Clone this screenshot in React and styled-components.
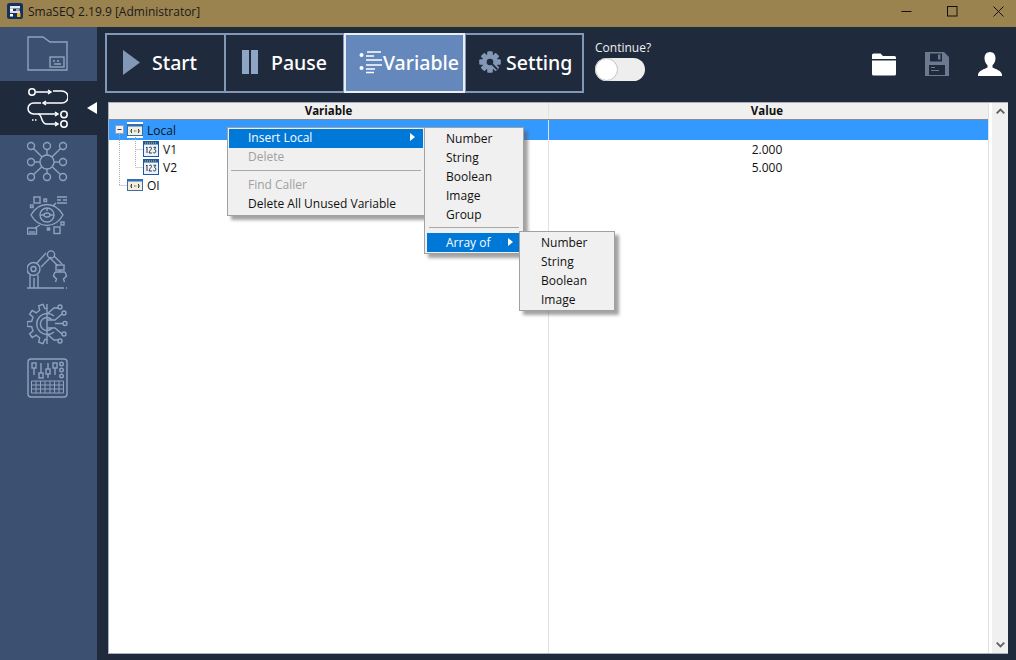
import React from "react";
import styled, { createGlobalStyle } from "styled-components";

const GlobalStyle = createGlobalStyle`
  html, body { margin: 0; padding: 0; height: 100%; overflow: hidden; }
  body { font-family: "Open Sans", "Noto Sans", sans-serif; }
`;

const Window = styled.div`
  width: 1016px;
  height: 660px;
  display: flex;
  flex-direction: column;
  background-color: #1f2a3c;
`;

const TitleBar = styled.div`
  height: 27px;
  box-sizing: border-box;
  flex: none;
  display: flex;
  align-items: center;
  background-color: #9b834f;
  padding: 0 0 5px 7px;
`;

const TitleText = styled.div`
  font-size: 12px;
  color: #1a1a1a;
  margin-left: 5px;
`;

const WindowButtons = styled.div`
  margin-left: auto;
  display: flex;
  align-items: center;
`;

const WindowButton = styled.div`
  width: 46px;
  height: 22px;
  box-sizing: border-box;
  padding-left: 10px;
  display: flex;
  align-items: center;
  justify-content: center;
`;

const Body = styled.div`
  flex: 1;
  display: flex;
  min-height: 0;
`;

const Sidebar = styled.div`
  width: 97px;
  flex: none;
  background-color: #3c5071;
  display: flex;
  flex-direction: column;
`;

const SideItem = styled.div`
  position: relative;
  height: 54px;
  display: flex;
  align-items: center;
  padding-left: 27px;
  background-color: ${(props) => (props.$active ? "#1f2a3c" : "transparent")};
`;

const SideArrow = styled.div`
  position: absolute;
  right: 0;
  top: 21px;
  border-top: 6px solid transparent;
  border-bottom: 6px solid transparent;
  border-right: 10px solid #ffffff;
`;

const Main = styled.div`
  flex: 1;
  display: flex;
  flex-direction: column;
  min-width: 0;
  padding: 6px 8px 6px 8px;
`;

const Toolbar = styled.div`
  height: 60px;
  flex: none;
  display: flex;
  align-items: stretch;
  margin-bottom: 9px;
`;

const ToolButton = styled.div`
  width: ${(props) => props.$width}px;
  margin-left: ${(props) => props.$overlap || 0}px;
  box-sizing: border-box;
  position: relative;
  z-index: ${(props) => (props.$active ? 1 : 0)};
  display: flex;
  align-items: center;
  padding: 0 0 2px ${(props) => props.$pad}px;
  gap: ${(props) => props.$gap}px;
  border: 2px solid ${(props) => (props.$active ? "#e8eef6" : "#8298b6")};
  background-color: ${(props) => (props.$active ? "#6488bc" : "#1f2a3c")};
  color: #ffffff;
  font-size: 19.5px;
  font-weight: 500;
  font-family: "Noto Sans", "Open Sans", sans-serif;
`;

const ContinueBox = styled.div`
  margin-left: 11px;
  padding-top: 6px;
  display: flex;
  flex-direction: column;
  gap: 2px;
`;

const ContinueLabel = styled.div`
  font-size: 12px;
  color: #f0f0f0;
  line-height: 17px;
`;

const ToggleTrack = styled.div`
  width: 50px;
  height: 23px;
  border-radius: 12px;
  background-color: #eeeeee;
  display: flex;
  align-items: center;
`;

const ToggleKnob = styled.div`
  width: 21px;
  height: 21px;
  box-sizing: content-box;
  border-radius: 50%;
  background-color: #ffffff;
  border: 1px solid #c4c4c4;
`;

const ToolIcons = styled.div`
  margin-left: auto;
  display: flex;
  align-items: center;
  gap: 29px;
  padding: 2px 6px 0 0;
  height: 60px;
  box-sizing: border-box;
`;

const Panel = styled.div`
  flex: 1;
  min-height: 0;
  margin-left: 3px;
  display: flex;
  background-color: #ffffff;
  border: 1px solid #a9b0ba;
`;

const Table = styled.div`
  position: relative;
  width: 880px;
  flex: none;
  display: flex;
  flex-direction: column;
  border-right: 1px solid #e2e2e2;
  box-sizing: border-box;
`;

const HeaderRow = styled.div`
  height: 16px;
  flex: none;
  display: grid;
  grid-template-columns: 440px 439px;
  background-color: #f0f0f0;
  border-bottom: 1px solid #8a8a8a;
`;

const HeaderCell = styled.div`
  text-align: center;
  font-size: 11.5px;
  font-weight: 700;
  line-height: 16px;
  color: #111111;
  padding-right: ${(props) => (props.$last ? "3px" : 0)};
  border-right: ${(props) => (props.$last ? "none" : "1px solid #e2e2e2")};
`;

const Row = styled.div`
  height: ${(props) => props.$height}px;
  flex: none;
  display: grid;
  grid-template-columns: 440px 439px;
  align-items: stretch;
  background-color: ${(props) => (props.$selected ? "#3399ff" : "transparent")};
`;

const NameCell = styled.div`
  display: flex;
  align-items: center;
  padding-left: ${(props) => props.$indent}px;
  gap: 4px;
  font-size: 12px;
  color: #111111;
  border-right: 1px solid #e2e2e2;
`;

const ValueCell = styled.div`
  display: flex;
  align-items: center;
  justify-content: center;
  padding-right: 3px;
  font-size: 12px;
  color: #111111;
`;

const FillRow = styled.div`
  flex: 1;
  display: grid;
  grid-template-columns: 440px 439px;
`;

const FillCell = styled.div`
  border-right: 1px solid #e2e2e2;
`;

const TreeGuides = styled.svg`
  position: absolute;
  left: 0;
  top: 0;
  pointer-events: none;
`;

const Scrollbar = styled.div`
  width: 16px;
  margin-left: 3px;
  flex: none;
  display: flex;
  flex-direction: column;
  justify-content: space-between;
  align-items: center;
  background-color: #f0f0f0;
  padding: 5px 0;
`;

const Menu = styled.div`
  position: absolute;
  left: ${(props) => props.$left}px;
  top: ${(props) => props.$top}px;
  width: ${(props) => props.$width}px;
  box-sizing: border-box;
  padding: 1px ${(props) => props.$inset}px 1px;
  background-color: #f0f0f0;
  border: 1px solid #a0a0a0;
  box-shadow: 4px 4px 3px rgba(90, 90, 90, 0.55);
  z-index: ${(props) => props.$z};
`;

const MenuItem = styled.div`
  height: 19px;
  box-sizing: border-box;
  display: flex;
  align-items: center;
  justify-content: space-between;
  padding: 0 8px ${(props) => (props.$lift ? 3 : 1)}px 19px;
  font-size: 12px;
  color: ${(props) =>
    props.$hot ? "#ffffff" : props.$off ? "#a0a0a0" : "#111111"};
  background-color: ${(props) => (props.$hot ? "#0078d7" : "transparent")};
`;

const MenuSeparator = styled.div`
  height: 1px;
  background-color: #a8a8a8;
  margin: 3px 2px 5px;
`;

const MenuArrow = styled.div`
  border-top: 4px solid transparent;
  border-bottom: 4px solid transparent;
  border-left: 5px solid #ffffff;
`;

const sideStroke = {
  fill: "none",
  stroke: "#8fa3bf",
  strokeWidth: 1.4,
};

const FolderIcon = () => (
  <svg width="41" height="36" viewBox="27 36 41 36" {...sideStroke}>
    <path d="M28 37h15l7 5h17v28H28z" />
    <rect x="50" y="57" width="14" height="10" />
    <path d="M53 61h2M57 61h2M54 64h7" />
  </svg>
);

const FlowIcon = () => (
  <svg width="41" height="42" viewBox="27 87 41 42" fill="none" stroke="#ffffff" strokeWidth="1.5">
    <circle cx="32" cy="92" r="3.2" />
    <path d="M36 92h15M48 90l3 2-3 2" />
    <path d="M53 91h9a6 6 0 0 1 0 12H43M46 101l-3 2 3 2" />
    <path d="M41 103h-7.500a5.500 5.500 0 0 0 0 11H58M55 112l3 2-3 2" />
    <circle cx="64" cy="114.500" r="3.2" />
    <path d="M32 120h6" strokeDasharray="1.5 1.5" />
    <path d="M38 114c2 0 2 1 3 3 1 3 2 7 5 7h12M55 122l3 2-3 2" />
    <circle cx="64" cy="124" r="3.2" />
  </svg>
);

const NetworkIcon = () => {
  const nodes = [
    [31, 146], [47, 146], [63, 146], [31, 162],
    [63, 162], [31, 177], [47, 177], [63, 177],
  ];
  return (
    <svg width="41" height="42" viewBox="27 141 41 42" {...sideStroke}>
      <circle cx="47" cy="162" r="7" />
      {nodes.map(([x, y]) => {
        const len = Math.hypot(x - 47, y - 162);
        const ux = (x - 47) / len;
        const uy = (y - 162) / len;
        return (
          <g key={`${x}-${y}`}>
            <circle cx={x} cy={y} r="3.5" />
            <line x1={47 + ux * 7} y1={162 + uy * 7} x2={x - ux * 3.5} y2={y - uy * 3.5} />
          </g>
        );
      })}
    </svg>
  );
};

const EyeIcon = () => (
  <svg width="41" height="40" viewBox="27 196 41 40" {...sideStroke}>
    <path d="M31 215c8-14 24-14 32 0-8 14-24 14-32 0z" />
    <circle cx="47" cy="215" r="7" />
    <ellipse cx="47" cy="215" rx="3" ry="2" />
    <path d="M40 215h4M50 215h4M47 208v3" />
    <rect x="34" y="197" width="6" height="6" />
    <rect x="44" y="199" width="2.5" height="2.5" />
    <rect x="30.5" y="205" width="2.5" height="2.5" />
    <path d="M57 197h10M57 200h4M63 200h4M57 203h10" />
    <path d="M53 206l3-3M40 225l-5 3" />
    <rect x="27.5" y="228" width="9" height="6" />
    <path d="M29 232h6" />
    <rect x="54" y="227" width="6" height="6.5" />
    <rect x="61" y="222" width="3" height="3" />
    <rect x="47.5" y="228" width="2" height="2" fill="#8fa3bf" />
  </svg>
);

const RobotIcon = () => (
  <svg width="41" height="40" viewBox="27 250 41 40" {...sideStroke}>
    <path d="M27 288h37M66 288h1" />
    <circle cx="33.500" cy="269" r="6.500" />
    <circle cx="33.500" cy="269" r="2.500" />
    <path d="M30 275v13M38 275v13M34 278v10" />
    <path d="M37 263l9-10M41 267l10-10" />
    <circle cx="51" cy="254.500" r="3.600" />
    <path d="M54 256l8 8M50 258l8 8" />
    <rect x="56" y="265" width="8" height="5" />
    <path d="M60 270v2M55 272h10M55 272l-1.500 4 3 3-1 3M65 272l1.500 4-3 3 1 3" />
  </svg>
);

// half gear, teeth pointing left of the shaft
const gearPath = () => {
  const points = [];
  const teeth = 5;
  for (let i = 0; i < teeth; i++) {
    const step = 180 / teeth;
    const start = 90 + i * step;
    [
      [start, 15.5],
      [start + step * 0.22, 15.5],
      [start + step * 0.32, 20],
      [start + step * 0.68, 20],
      [start + step * 0.78, 15.5],
    ].forEach(([a, r]) => {
      const rad = (a * Math.PI) / 180;
      points.push(`${(47 + r * Math.cos(rad)).toFixed(1)} ${(324 - r * Math.sin(rad)).toFixed(1)}`);
    });
  }
  points.push("47 339.500");
  return `M47 304V344M${points.join("L")}`;
};

const GearIcon = () => (
  <svg width="41" height="42" viewBox="27 303 41 42" {...sideStroke}>
    <path d={gearPath()} />
    <path d="M54 316a10.500 10.500 0 1 0 0 16M52 320a6.500 6.500 0 1 0 0 8" />
    <path d="M47 314l7-6h4M47 320h8l7-6M55 323.500h8M47 328h8l7 6M47 334l7 6h4" />
    <circle cx="60" cy="307" r="2" />
    <circle cx="64" cy="313" r="2" />
    <circle cx="65" cy="323.500" r="2" />
    <circle cx="64" cy="334" r="2" />
    <circle cx="60" cy="341" r="2" />
  </svg>
);

const MixerIcon = () => (
  <svg width="41" height="40" viewBox="27 358 41 40" {...sideStroke}>
    <rect x="28" y="359" width="39" height="38" rx="3" />
    <path d="M34 363v12M41 363v15M48 363v15M55 363v12" />
    <rect x="32" y="363" width="4" height="5" fill="#3c5071" />
    <rect x="39" y="373" width="4" height="5" fill="#3c5071" />
    <rect x="46" y="369" width="4" height="5" fill="#3c5071" />
    <rect x="53" y="363" width="4" height="5" fill="#3c5071" />
    <circle cx="61.5" cy="364" r="1.8" />
    <circle cx="61.5" cy="370" r="1.8" />
    <circle cx="61.5" cy="376" r="1.8" />
    <path d="M31.5 381h32v12h-32zM31.5 385h32M31.5 389h32M36 381v12M40.5 381v12M45 381v12M50 381v12M54.5 381v12M59 381v12" strokeWidth="1" />
  </svg>
);

const AppLogo = () => (
  <svg width="16" height="16" viewBox="0 0 16 16">
    <rect width="16" height="16" rx="2.5" fill="#15305f" />
    <rect x="3" y="3" width="10" height="2.5" fill="#e8e8e8" />
    <rect x="3" y="5.5" width="3" height="3" fill="#ffffff" />
    <rect x="3" y="8" width="10" height="2" fill="#d8dce4" />
    <rect x="9" y="6" width="3.5" height="2" fill="#8fa3bf" />
    <rect x="3" y="11" width="3" height="2.5" fill="#ffffff" />
    <rect x="10" y="10" width="3.5" height="4" fill="#f0b429" />
  </svg>
);

const VariableListIcon = () => (
  <svg width="24" height="24" viewBox="0 0 24 24" fill="#ffffff" stroke="#ffffff">
    <circle cx="2.500" cy="5" r="2" stroke="none" />
    <circle cx="2.500" cy="18" r="2" stroke="none" />
    <path d="M8 2h14M7 6h8M7 10h16M7 15h16M7 19h9M7 22.500h8" strokeWidth="1.400" fill="none" />
  </svg>
);

const SettingIcon = () => {
  const teeth = [0, 45, 90, 135, 180, 225, 270, 315];
  return (
    <svg width="22" height="22" viewBox="0 0 24 24" fill="#8298b6">
      {teeth.map((a) => (
        <rect key={a} x="9.2" y="0.5" width="5.6" height="23" rx="1" transform={`rotate(${a} 12 12)`} />
      ))}
      <circle cx="12" cy="12" r="8.5" />
      <circle cx="12" cy="12" r="3.6" fill="#1f2a3c" />
      <path d="M14 14l6 6" stroke="#1f2a3c" strokeWidth="2" />
    </svg>
  );
};

const OpenFolderIcon = () => (
  <svg width="24" height="23" viewBox="0 0 24 23" fill="#ffffff">
    <path d="M0 2a1.500 1.500 0 0 1 1.500-1.500h7L11 3h11.500A1.500 1.500 0 0 1 24 4.500V6H0z" />
    <path d="M0 7.500h24V21a1.500 1.500 0 0 1-1.500 1.500h-21A1.500 1.500 0 0 1 0 21z" />
  </svg>
);

const SaveIcon = () => (
  <svg width="24" height="24" viewBox="0 0 24 24" fill="#6b7a90" fillRule="evenodd">
    <path d="M0 0h19l5 5v19H0zM5 1.500v8h12v-8zM4 13v10h16V13z" />
    <rect x="13" y="2.500" width="2.500" height="5" />
    <path d="M6 15h4v1H6zM6 18h8v1H6z" />
  </svg>
);

const UserIcon = () => (
  <svg width="24" height="24" viewBox="0 0 24 24" fill="#ffffff">
    <path d="M12 0c3.600 0 5.500 2.800 5.500 6.200 0 3-1.500 5.800-3 7v2.300c2.500 1.500 9.500 3 9.500 7.500v1H0v-1c0-4.500 7-6 9.500-7.500v-2.300c-1.500-1.200-3-4-3-7C6.500 2.800 8.400 0 12 0z" />
  </svg>
);

const GroupIcon = ({ boxed }) => (
  <svg width="16" height="16" viewBox="0 0 16 16">
    {boxed && <rect width="16" height="16" fill="#ffffff" />}
    <rect x="0.5" y="2.500" width="15" height="11" fill="#f2efdc" stroke="#3f6aa8" />
    <rect x="0.5" y="2.500" width="15" height="2" fill="#2f6bc0" />
    <path d="M4.500 7v1.500l-1 .5 1 .5V11M11.500 7v1.500l1 .5-1 .5V11M7 9h.8M8.500 9h.8" fill="none" stroke="#333333" />
  </svg>
);

const NumberIcon = () => (
  <svg width="16" height="16" viewBox="0 0 16 16">
    <rect x="0.5" y="0.500" width="15" height="15" fill="#eaf2fb" stroke="#1c56a8" />
    <rect x="1" y="1" width="14" height="2.500" fill="#1c56a8" />
    <path d="M2 2h1M4 2h1M6 2h1M8 2h1M10 2h1M12 2h1" stroke="#f3c623" />
    <path d="M3 7l1-1v6M6.200 7c.5-1.400 2.600-1 2.300.5-.2 1.200-2.300 2.400-2.400 4.500h2.800M10.500 6.300h2.300l-1.300 2c1.600 0 1.900 3.700-.2 3.700-.6 0-1-.3-1.200-.7" fill="none" stroke="#222222" strokeWidth="0.900" />
  </svg>
);

const Chevron = ({ down }) => (
  <svg width="9" height="6" viewBox="0 0 9 6" fill="none" stroke="#606060" strokeWidth="1.800">
    <path d={down ? "M.7 .7l3.800 3.800 3.800-3.800" : "M.7 5.300l3.800-3.800 3.800 3.800"} />
  </svg>
);

const sideIcons = [FolderIcon, FlowIcon, NetworkIcon, EyeIcon, RobotIcon, GearIcon, MixerIcon];

const insertItems = ["Number", "String", "Boolean", "Image", "Group"];
const arrayItems = ["Number", "String", "Boolean", "Image"];

const App = () => {
  return (
    <Window>
      <GlobalStyle />
      <TitleBar>
        <AppLogo />
        <TitleText>SmaSEQ 2.19.9 [Administrator]</TitleText>
        <WindowButtons>
          <WindowButton>
            <svg width="11" height="11" viewBox="0 0 11 11" stroke="#111" fill="none"><path d="M.5 5.500h10" /></svg>
          </WindowButton>
          <WindowButton>
            <svg width="11" height="11" viewBox="0 0 11 11" stroke="#111" fill="none"><rect x=".5" y=".5" width="9.500" height="9.500" /></svg>
          </WindowButton>
          <WindowButton>
            <svg width="11" height="11" viewBox="0 0 11 11" stroke="#111" fill="none"><path d="M.5 .5l10 10M10.500 .5l-10 10" /></svg>
          </WindowButton>
        </WindowButtons>
      </TitleBar>
      <Body>
        <Sidebar>
          {sideIcons.map((Icon, i) => (
            <SideItem key={i} $active={i === 1}>
              <Icon />
              {i === 1 && <SideArrow />}
            </SideItem>
          ))}
        </Sidebar>
        <Main>
          <Toolbar>
            <ToolButton $width={121} $pad={16} $gap={12}>
              <svg width="17" height="25" viewBox="0 0 17 25"><path d="M0 0l17 12.500L0 25z" fill="#8298b6" /></svg>
              Start
            </ToolButton>
            <ToolButton $overlap={-2} $width={121} $pad={16} $gap={13}>
              <svg width="16" height="24" viewBox="0 0 16 24" fill="#8fa5c4"><rect width="7" height="24" /><rect x="9" width="7" height="24" /></svg>
              Pause
            </ToolButton>
            <ToolButton $active $overlap={-1} $width={121} $pad={13} $gap={0}>
              <VariableListIcon />
              Variable
            </ToolButton>
            <ToolButton $overlap={-1} $width={120} $pad={13} $gap={5}>
              <SettingIcon />
              Setting
            </ToolButton>
            <ContinueBox>
              <ContinueLabel>Continue?</ContinueLabel>
              <ToggleTrack>
                <ToggleKnob />
              </ToggleTrack>
            </ContinueBox>
            <ToolIcons>
              <OpenFolderIcon />
              <SaveIcon />
              <UserIcon />
            </ToolIcons>
          </Toolbar>
          <Panel>
            <Table>
              <HeaderRow>
                <HeaderCell>Variable</HeaderCell>
                <HeaderCell $last>Value</HeaderCell>
              </HeaderRow>
              <Row $selected $height={20}>
                <NameCell $indent={18}>
                  <GroupIcon boxed />
                  Local
                </NameCell>
                <ValueCell />
              </Row>
              <Row $height={18}>
                <NameCell $indent={34}>
                  <NumberIcon />
                  V1
                </NameCell>
                <ValueCell>2.000</ValueCell>
              </Row>
              <Row $height={18}>
                <NameCell $indent={34}>
                  <NumberIcon />
                  V2
                </NameCell>
                <ValueCell>5.000</ValueCell>
              </Row>
              <Row $height={18}>
                <NameCell $indent={18}>
                  <GroupIcon />
                  OI
                </NameCell>
                <ValueCell />
              </Row>
              <FillRow>
                <FillCell />
                <div />
              </FillRow>
              <TreeGuides width="60" height="90" viewBox="0 0 60 90" fill="none">
                <g stroke="#a8a8a8" strokeDasharray="1 1">
                  <path d="M10.500 31v51M10.500 82.500h8M26.500 34v30M26.500 46.500h8M26.500 64.500h8" />
                </g>
                <rect x="6.500" y="22.500" width="8" height="8" fill="#f0f0f0" stroke="#9aa0ac" />
                <path d="M8.500 26.500h4" stroke="#334" />
              </TreeGuides>
              <Menu $left={118} $top={24} $width={198} $inset={1} $z={2}>
                <MenuItem $hot $lift>
                  Insert Local
                  <MenuArrow />
                </MenuItem>
                <MenuItem $off $lift>Delete</MenuItem>
                <MenuSeparator />
                <MenuItem $off $lift>Find Caller</MenuItem>
                <MenuItem $lift>Delete All Unused Variable</MenuItem>
                <Menu $left={196} $top={-1} $width={100} $inset={2} $z={3}>
                  {insertItems.map((label) => (
                    <MenuItem key={label}>{label}</MenuItem>
                  ))}
                  <MenuSeparator />
                  <MenuItem $hot>
                    Array of
                    <MenuArrow />
                  </MenuItem>
                  <Menu $left={94} $top={103} $width={96} $inset={2} $z={4}>
                    {arrayItems.map((label) => (
                      <MenuItem key={label}>{label}</MenuItem>
                    ))}
                  </Menu>
                </Menu>
              </Menu>
            </Table>
            <Scrollbar>
              <Chevron />
              <Chevron down />
            </Scrollbar>
          </Panel>
        </Main>
      </Body>
    </Window>
  );
};

export default App;
